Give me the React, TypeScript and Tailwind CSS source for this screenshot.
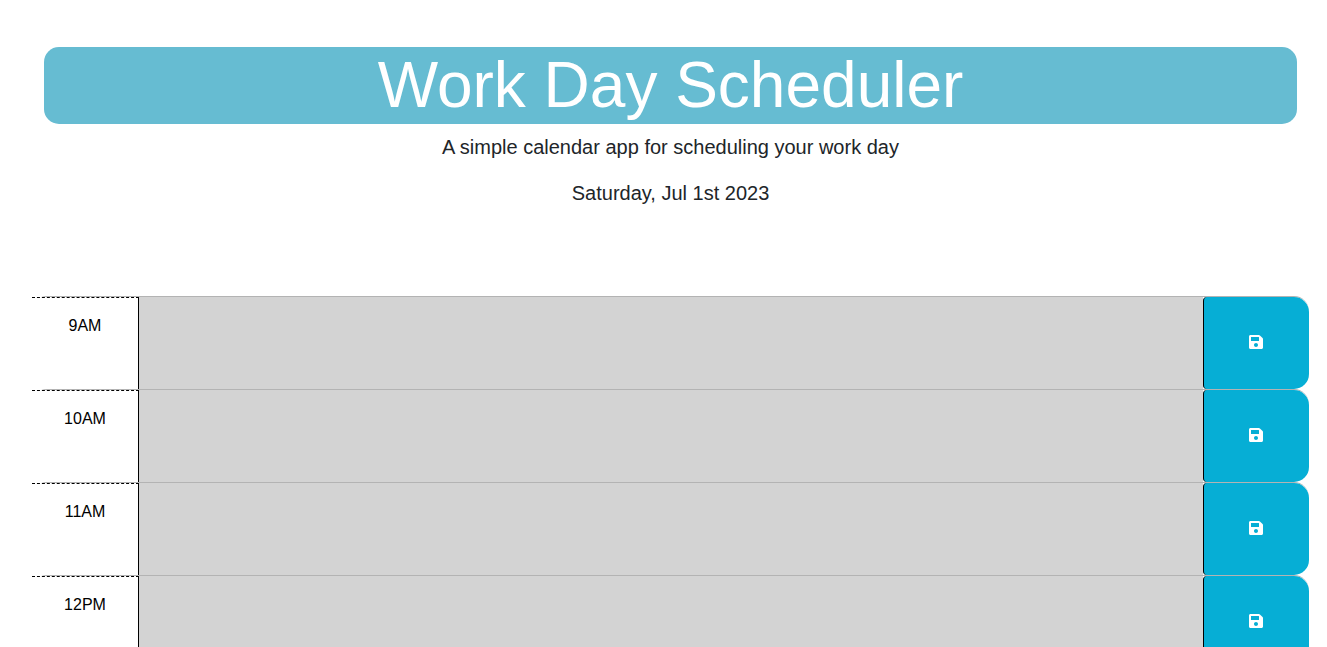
import { FaSave } from "react-icons/fa";

const hours = ["9AM", "10AM", "11AM", "12PM"];

function TimeBlock({ hour }: { hour: string }) {
  const id = `hour-${hour}`;
  return (
    <div className="grid grid-cols-[107px_1fr_106px] rounded-[15px] border-t border-[#b3b3b3]">
      <label
        htmlFor={id}
        className="border-t border-r border-dashed border-black bg-white pt-4 text-center text-base leading-6 text-black [border-right-style:solid]"
      >
        {hour}
      </label>
      <textarea
        id={id}
        className="block h-[92px] w-full resize-none bg-[#d3d3d3] px-3 py-2 text-black outline-none"
      />
      <button
        type="button"
        aria-label={`Save ${hour}`}
        className="flex cursor-pointer items-center justify-center rounded-l rounded-r-[15px] border-l border-black bg-[#06aed5] pr-0.5 pb-0.5 text-base text-white"
      >
        <FaSave aria-hidden="true" />
      </button>
    </div>
  );
}

export default function App() {
  return (
    <div className="min-h-screen bg-white pr-[18px] pl-8 font-['Liberation_Sans',Arial,sans-serif] text-[#212529]">
      <header className="px-3 pt-[47px] pb-[88px] text-center">
        <h1 className="mb-2 rounded-[15px] bg-[#66bcd2] text-[64px] leading-[77px] text-white">
          Work Day Scheduler
        </h1>
        <p className="mb-4 text-xl leading-[30px]">
          A simple calendar app for scheduling your work day
        </p>
        <p className="text-xl leading-[30px]">Saturday, Jul 1st 2023</p>
      </header>
      <main>
        {hours.map((hour) => (
          <TimeBlock key={hour} hour={hour} />
        ))}
      </main>
    </div>
  );
}
